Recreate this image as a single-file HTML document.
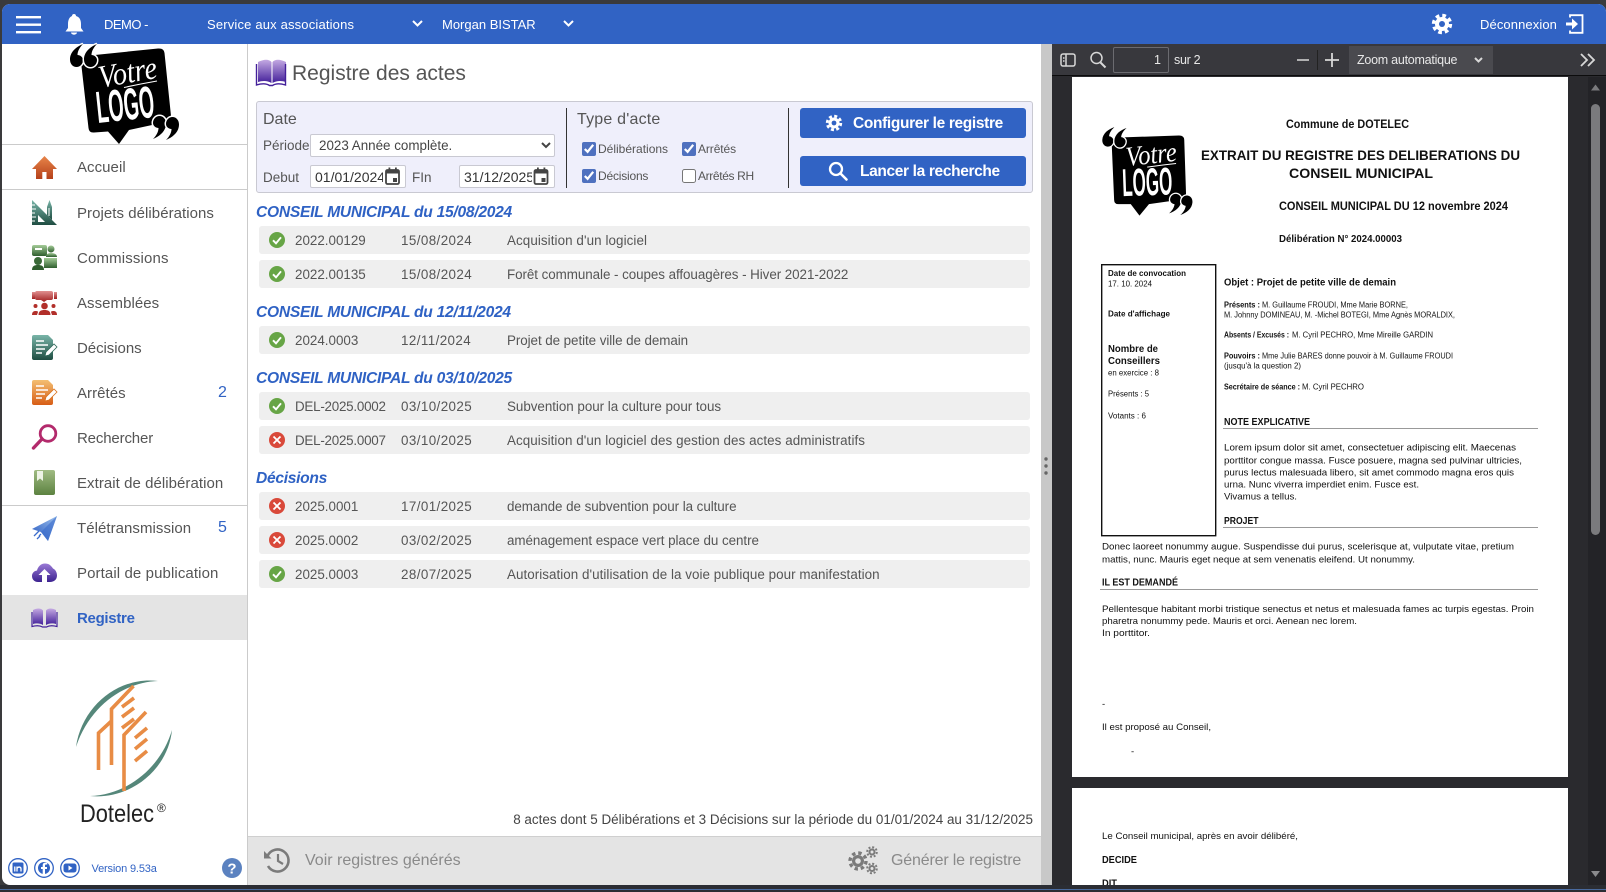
<!DOCTYPE html>
<html lang="fr"><head><meta charset="utf-8"><title>Registre des actes</title>
<style>
html,body{margin:0;padding:0;width:1606px;height:892px;overflow:hidden;background:#3a3a3c;font-family:"Liberation Sans",sans-serif}
*{box-sizing:border-box}
.a{position:absolute}
.t{position:absolute;white-space:nowrap;line-height:20px;height:20px}
svg{position:absolute;overflow:visible}
#app{position:absolute;left:2px;top:4px;width:1604px;height:881px;border-radius:8px 8px 8px 8px;overflow:hidden;background:#fff}
#stage{position:absolute;left:0;top:0;width:1606px;height:892px}
.hd{color:#fff;font-size:13px}
.nav{font-size:15px;color:#555;left:77px;letter-spacing:.05px}
.line{position:absolute;left:2px;width:245px;height:1px;background:#cbcbcb}
.row{position:absolute;left:259px;width:771px;height:28px;background:#efefef;border-radius:3px}
.c{font-size:13.4px;color:#555}
.d{left:401px;letter-spacing:.41px}
.h{left:256px;font-size:15.6px;font-weight:bold;font-style:italic;color:#2f62c4;letter-spacing:-.27px}
.btn{position:absolute;left:800px;width:226px;height:30px;background:#3163c4;border-radius:3px}
.bt{color:#fff;font-size:15.5px;font-weight:bold;letter-spacing:-.35px}
.lab{font-size:12px;color:#555}
.f{font-size:13.5px;color:#555}
input[type=checkbox]{position:absolute;margin:0;width:14px;height:14px;accent-color:#4f71bf}
.inp{position:absolute;height:23px;background:#fff;border:1px solid #c9c9d2;border-radius:2px;font:14px "Liberation Sans",sans-serif;color:#333;overflow:hidden;white-space:nowrap;line-height:22px}
</style></head><body>
<div id="stage">
<div id="app"></div>

<!-- header -->
<div class="a" style="left:2px;top:4px;width:1604px;height:40px;background:#3163c4;border-radius:8px 8px 0 0"></div>
<svg style="left:0;top:0" width="1606" height="44">
<g fill="#fff">
<rect x="16" y="16" width="25" height="2.4"/><rect x="16" y="23.5" width="25" height="2.4"/><rect x="16" y="31" width="25" height="2.4"/>
<path d="M74 14c1.200 0 2 .8 2 2 3.600 1 5 4 5 8v4l2.500 3.500H65.500L68 28v-4c0-4 1.400-7 4-8 0-1.200.8-2 2-2z"/><path d="M71 32.500h6a3 2.200 0 0 1-6 0z"/>
<path d="M413 21l4.500 4.500L422 21" fill="none" stroke="#fff" stroke-width="2"/>
<path d="M564 21l4.500 4.500L573 21" fill="none" stroke="#fff" stroke-width="2"/>
<circle cx="1442" cy="24" r="7"/><circle cx="1442" cy="24" r="8.500" fill="none" stroke="#fff" stroke-width="3.400" stroke-dasharray="3.700 2.980"/><circle cx="1442" cy="24" r="3" fill="#3163c4"/>
<path d="M1570 17.500v-2.300h12.500v17.600H1570v-2.300" fill="none" stroke="#fff" stroke-width="1.800"/><path d="M1566 22.500h6v-4l6 5.500-6 5.500v-4h-6z"/>
</g></svg>
<div class="t hd" style="left:104px;top:15px;letter-spacing:-.5px">DEMO -</div>
<div class="t hd" style="left:207px;top:15px;letter-spacing:.17px">Service aux associations</div>
<div class="t hd" style="left:442px;top:15px">Morgan BISTAR</div>
<div class="t hd" style="left:1480px;top:15px;letter-spacing:.1px">Déconnexion</div>

<!-- sidebar -->
<div class="a" style="left:247px;top:44px;width:1px;height:841px;background:#cbcbcb"></div>
<svg style="left:0;top:44px" width="248" height="102" viewBox="0 44 248 102">
<path d="M85 56 L158 48.500 Q164 48 164.500 53 L171 116 Q171.500 121 166 122 L129 130 L119 144 L108 131.500 L94 132.500 Q89 133 88.500 128 L81 62 Q80.500 57 85 56Z" fill="#000"/>
<g fill="#000" stroke="#fff" stroke-width="3" paint-order="stroke">
<path d="M83 44C76 47 70 52 70 59.500 70 64 73 67 76.500 67 80 67 83 64 83 60 83 57 80 55 77.500 55 77.500 51 80 47 83 44z"/>
<path d="M97 44C90 47 84 52 84 59.500 84 64 87 67 90.500 67 94 67 97 64 97 60 97 57 94 55 91.500 55 91.500 51 94 47 97 44z"/>
<path d="M153 139C160 136 166 131 166 123.500 166 119 163 116 159.500 116 156 116 153 119 153 123 153 126 156 128 158.500 128 158.500 132 156 136 153 139z"/>
<path d="M166 140C173 137 179 132 179 124.500 179 120 176 117 172.500 117 169 117 166 120 166 124 166 127 169 129 171.500 129 171.500 133 169 137 166 140z"/>
</g>
<text x="98" y="83" font-family="'Liberation Serif',serif" font-style="italic" font-size="32" fill="#fff" textLength="59" lengthAdjust="spacingAndGlyphs" transform="rotate(-10 127 72)">Votre</text>
<path d="M124 87.500Q140 84 157 81" fill="none" stroke="#fff" stroke-width="1.100"/>
<text x="96" y="120" font-family="'Liberation Sans',sans-serif" font-weight="bold" font-size="45" fill="#fff" textLength="58" lengthAdjust="spacingAndGlyphs" transform="rotate(-6 125 103)">LOGO</text>
</svg>
<div class="line" style="top:144px"></div>
<div class="line" style="top:189px"></div>
<div class="line" style="top:505px"></div>
<div class="a" style="left:2px;top:595px;width:245px;height:45px;background:#e4e4e4"></div>

<div class="t nav" style="top:158px">Accueil</div>
<div class="t nav" style="top:204px">Projets délibérations</div>
<div class="t nav" style="top:249px;letter-spacing:.15px">Commissions</div>
<div class="t nav" style="top:294px">Assemblées</div>
<div class="t nav" style="top:339px;letter-spacing:-.05px">Décisions</div>
<div class="t nav" style="top:384px">Arrêtés</div>
<div class="t nav" style="top:429px;letter-spacing:-.15px">Rechercher</div>
<div class="t nav" style="top:474px">Extrait de délibération</div>
<div class="t nav" style="top:519px">Télétransmission</div>
<div class="t nav" style="top:564px;letter-spacing:.1px">Portail de publication</div>
<div class="t nav" style="top:609px;color:#3163c4;font-weight:bold;letter-spacing:-.3px">Registre</div>
<div class="t" style="left:218px;top:383px;font-size:16px;color:#3163c4">2</div>
<div class="t" style="left:218px;top:518px;font-size:16px;color:#3163c4">5</div>

<svg style="left:0;top:0" width="248" height="892">
<defs>
<linearGradient id="g1" x1="0" y1="0" x2="0" y2="1"><stop offset="0" stop-color="#e8854a"/><stop offset="1" stop-color="#b5401a"/></linearGradient>
<linearGradient id="g2" x1="0" y1="0" x2="0" y2="1"><stop offset="0" stop-color="#79b5a8"/><stop offset="1" stop-color="#1f4d42"/></linearGradient>
<linearGradient id="g3" x1="0" y1="0" x2="0" y2="1"><stop offset="0" stop-color="#a4cc98"/><stop offset="1" stop-color="#2f5e2e"/></linearGradient>
<linearGradient id="g4" x1="0" y1="0" x2="0" y2="1"><stop offset="0" stop-color="#e08f8f"/><stop offset="1" stop-color="#a11f1f"/></linearGradient>
<linearGradient id="g5" x1="0" y1="0" x2="0" y2="1"><stop offset="0" stop-color="#f4bf72"/><stop offset="1" stop-color="#d75d16"/></linearGradient>
<linearGradient id="g6" x1="0" y1="0" x2="0" y2="1"><stop offset="0" stop-color="#a0bb83"/><stop offset="1" stop-color="#5c8240"/></linearGradient>
<linearGradient id="g7" x1="1" y1="0" x2="0" y2="1"><stop offset="0" stop-color="#9cc0ec"/><stop offset="1" stop-color="#2557c0"/></linearGradient>
<linearGradient id="g8" x1="0" y1="0" x2="0" y2="1"><stop offset="0" stop-color="#9a7ad6"/><stop offset="1" stop-color="#3d2390"/></linearGradient>
<linearGradient id="g9" x1="0" y1="0" x2="0" y2="1"><stop offset="0" stop-color="#c4a9e2"/><stop offset="1" stop-color="#43209a"/></linearGradient>
</defs>
<path d="M44.500 156L57 169h-4v10h-6.500v-7h-4.200v7H36v-10h-4z" fill="url(#g1)"/>
<path d="M32 200l25 25H32z" fill="url(#g2)"/><path d="M38 215l7 7h-7z" fill="#fff"/>
<path d="M32 205h3M32 209h4M32 213h3M32 217h4M32 221h3" stroke="#fff" stroke-width="1"/>
<path d="M47 207l2.500-7 2.500 7v13l-5-5z" fill="url(#g2)"/><path d="M49 208v8" stroke="#fff" stroke-width="1"/>
<g fill="url(#g3)"><rect x="32" y="245" width="15" height="11" rx="2"/><circle cx="51" cy="249" r="3.500"/><path d="M46 257c0-3 2-4 5-4s6 1 6 4z"/><rect x="44" y="258" width="13" height="10"/></g>
<rect x="35" y="248" width="7" height="2" fill="#fff"/>
<circle cx="38" cy="261" r="4" fill="#3a6a38"/><path d="M32 270c0-4 2.500-5 6-5s6 1 6 5z" fill="#2f5e2e"/>
<g fill="url(#g4)"><path d="M37 291h14q2 0 2 2v5q0 2-2 2h-4l-3 2-3-2h-4q-2 0-2-2v-5q0-2 2-2z"/><path d="M32 292h3v7h-3z"/><path d="M54 292h3v7h-3z"/></g>
<g fill="#b22f2a"><circle cx="44.500" cy="306" r="3.300"/><path d="M38.500 315c0-4 2.500-5 6-5s6 1 6 5z"/><circle cx="35.500" cy="306" r="2"/><path d="M32 315c0-3 1.500-4 3.500-4s2.500.5 2.500 1l-1 3z"/><circle cx="53.500" cy="306" r="2"/><path d="M57 315c0-3-1.500-4-3.500-4s-2.500.5-2.500 1l1 3z"/></g>
<path d="M34 335h14l5 5v18q0 2-2 2H34q-2 0-2-2v-21q0-2 2-2z" fill="url(#g2)"/>
<path d="M36 341h8M36 345h12M36 349h9M36 353h6" stroke="#fff" stroke-width="1.500"/>
<path d="M45 356l1-4 8-8 3 3-8 8z" fill="#fff" stroke="#2f6a5a" stroke-width=".8"/>
<path d="M34 380h14l5 5v18q0 2-2 2H34q-2 0-2-2v-21q0-2 2-2z" fill="url(#g5)"/>
<path d="M36 386h8M36 390h12M36 394h9M36 398h6" stroke="#fff" stroke-width="1.500"/>
<path d="M45 401l1-4 8-8 3 3-8 8z" fill="#fff" stroke="#d9701c" stroke-width=".8"/>
<circle cx="48" cy="433.500" r="7.800" fill="none" stroke="#b32a6c" stroke-width="2.800"/><path d="M42 439l-8.500 9" stroke="#b32a6c" stroke-width="3.400" stroke-linecap="round"/>
<rect x="34" y="470" width="21" height="25" rx="2" fill="url(#g6)"/><path d="M37 471h6v10l-3-2.500-3 2.500z" fill="#eef3e6"/>
<path d="M57 516L32 529l9 3 7 9z" fill="url(#g7)"/><path d="M57 516L41 532l7 9z" fill="#3a6ccb" opacity=".6"/>
<path d="M34 536l5-5M37 539l3-3M41 534l-2 2" stroke="#3a6ccb" stroke-width="1.300"/>
<path d="M38 582c-4 0-6-3-6-6s2-5 5-5.500c1-4 4-7 8-7s6 2 8 5c2.500 1 4 4 4 7 0 4-3 6.500-7 6.500z" fill="url(#g8)"/>
<path d="M44.500 569l6 6h-3.500v7h-5v-7h-3.500z" fill="#fff"/>
<g fill="url(#g9)"><path d="M33 610c4-2 8-2 10 .5V625c-3-2-7-2-10-1z"/><path d="M56 610c-4-2-8-2-10 .5V625c3-2 7-2 10-1z"/></g>
<path d="M32 612v14.500c4-1 8-1 10.500.5h4c2.500-1.500 6.500-1.500 10.500-.5V612" fill="none" stroke="#43209a" stroke-width="1.200"/>

<!-- dotelec -->
<path d="M76 747C82 705 120 676 158 681 125 682 90 705 76 747z" fill="#55877a"/>
<path d="M172 730C168 770 130 800 90 796 125 795 160 770 172 730z" fill="#55877a"/>
<g fill="none" stroke="#e88c45" stroke-width="3.600">
<path d="M98.500 770v-37l13-12"/><path d="M111.500 765v-56l22-23"/><path d="M124 791v-56l22-23"/>
<path d="M122 707l12-9M122 717l12-9M122 728l12-9"/><path d="M135 738l12-10M135 749l12-10M135 761l12-10"/>
</g>
<text x="80" y="822" font-family="'Liberation Sans',sans-serif" font-size="25" fill="#222" textLength="74" lengthAdjust="spacingAndGlyphs">Dotelec</text>
<text x="157" y="812" font-family="'Liberation Sans',sans-serif" font-size="12" fill="#222">®</text>
<!-- social -->
<g fill="none" stroke="#3163c4" stroke-width="1.300"><circle cx="18" cy="868" r="9.300"/><circle cx="44" cy="868" r="9.300"/><circle cx="70" cy="868" r="9.300"/></g>
<rect x="12.500" y="862.500" width="11" height="11" rx="1.500" fill="#3163c4"/><path d="M14.800 866.500v5M17 871.500v-5M17 868.500c1-2 4-2 4 .5v2.500" stroke="#fff" stroke-width="1.300" fill="none"/>
<circle cx="44" cy="868" r="6" fill="#3163c4"/><path d="M45 874v-5h2v-2h-2v-1.500c0-.8.4-1 1-1h1.200v-1.700H45c-1.600 0-2.300 1-2.300 2.500V867H41v2h1.700v5z" fill="#fff"/>
<rect x="63.500" y="863.500" width="13" height="9" rx="2.500" fill="#3163c4"/><path d="M68.500 865.500l4 2.500-4 2.500z" fill="#fff"/>
<circle cx="232" cy="868" r="10" fill="#5b82c0"/>
<text x="232" y="873.500" text-anchor="middle" font-family="'Liberation Sans',sans-serif" font-weight="bold" font-size="15" fill="#fff">?</text>
</svg>
<div class="t" style="left:91.500px;top:859px;font-size:11px;color:#3163c4;letter-spacing:-.16px">Version 9.53a</div>

<!-- main -->
<svg style="left:0;top:0" width="300" height="100">
<g fill="url(#g9)"><path d="M258 62c6-3 11-3 13.500 0v21c-4-2.500-9-2.500-13.500-1z"/><path d="M284 62c-6-3-11-3-13.500 0v21c4-2.500 9-2.500 13.500-1z" transform="translate(2)"/></g>
<path d="M256.500 64v21c5-1.500 10-1.500 13 .5h3c3-2 8-2 13-.5V64" fill="none" stroke="#43209a" stroke-width="1.400"/>
</svg>
<div class="t" style="left:292px;top:64px;font-size:21px;color:#555">Registre des actes</div>

<div class="a" style="left:256px;top:101px;width:777px;height:92px;background:#efeffb;border:1px solid #c9c9d2;border-radius:3px"></div>
<div class="t" style="left:263px;top:110px;font-size:16px;color:#555">Date</div>
<div class="a" style="left:566px;top:108px;width:1px;height:80px;background:#333"></div>
<div class="t" style="left:577px;top:110px;font-size:16px;color:#555;letter-spacing:.2px">Type d'acte</div>
<div class="a" style="left:788px;top:108px;width:1px;height:80px;background:#333"></div>
<div class="t f" style="left:263px;top:136px">Période</div>
<select class="a" style="left:310px;top:134px;width:245px;height:23px;background:#fff;border:1px solid #c9c9d2;border-radius:2px;font:13.400px 'Liberation Sans',sans-serif;color:#444;padding-left:4px"><option>2023 Année complète.</option></select>
<div class="t f" style="left:263px;top:168px">Debut</div>
<div class="inp" style="left:310px;top:165px;width:96px;padding-left:4px;"><span style="display:inline-block;width:68px;overflow:hidden">01/01/2024</span></div>
<div class="t f" style="left:412px;top:168px">FIn</div>
<div class="inp" style="left:459px;top:165px;width:96px;padding-left:4px;"><span style="display:inline-block;width:68px;overflow:hidden">31/12/2025</span></div>
<svg style="left:0;top:0" width="600" height="200">
<g fill="none" stroke="#444" stroke-width="1.800"><rect x="386" y="170" width="13" height="14" rx="1.500"/><rect x="534.500" y="170" width="13" height="14" rx="1.500"/></g>
<g fill="#444"><rect x="386" y="170" width="13" height="3.500"/><rect x="534.500" y="170" width="13" height="3.500"/><rect x="393" y="178" width="4" height="4"/><rect x="541.500" y="178" width="4" height="4"/><rect x="388.500" y="167.500" width="1.800" height="3"/><rect x="395" y="167.500" width="1.800" height="3"/><rect x="537" y="167.500" width="1.800" height="3"/><rect x="543.500" y="167.500" width="1.800" height="3"/></g>
</svg>
<input type="checkbox" checked style="left:582px;top:142px"><div class="t lab" style="left:598px;top:139px">Délibérations</div>
<input type="checkbox" checked style="left:682px;top:142px"><div class="t lab" style="left:698px;top:139px;letter-spacing:-.1px">Arrêtés</div>
<input type="checkbox" checked style="left:582px;top:169px"><div class="t lab" style="left:598px;top:166px;letter-spacing:-.2px">Décisions</div>
<input type="checkbox" style="left:682px;top:169px"><div class="t lab" style="left:698px;top:166px;letter-spacing:-.36px">Arrêtés RH</div>

<div class="btn" style="top:108px"></div><div class="t bt" style="left:853px;top:113.500px">Configurer le registre</div>
<div class="btn" style="top:156px"></div><div class="t bt" style="left:860px;top:161.500px">Lancer la recherche</div>
<svg style="left:0;top:0" width="900" height="200">
<circle cx="834" cy="123" r="5.500" fill="#fff"/><circle cx="834" cy="123" r="6.800" fill="none" stroke="#fff" stroke-width="2.800" stroke-dasharray="3 2.340"/><circle cx="834" cy="123" r="2.400" fill="#3163c4"/>
<circle cx="836" cy="169" r="6" fill="none" stroke="#fff" stroke-width="2.300"/><path d="M840.500 173.500l6 6" stroke="#fff" stroke-width="2.600" stroke-linecap="round"/>
</svg>

<div class="t h" style="top:203px">CONSEIL MUNICIPAL du 15/08/2024</div>
<div class="t h" style="top:303px">CONSEIL MUNICIPAL du 12/11/2024</div>
<div class="t h" style="top:369px">CONSEIL MUNICIPAL du 03/10/2025</div>
<div class="t h" style="top:469px;letter-spacing:-.3px">Décisions</div>

<div class="row" style="top:226px"></div>
<div class="row" style="top:260px"></div>
<div class="row" style="top:326px"></div>
<div class="row" style="top:392px"></div>
<div class="row" style="top:426px"></div>
<div class="row" style="top:492px"></div>
<div class="row" style="top:526px"></div>
<div class="row" style="top:560px"></div>

<div class="t c" style="left:295px;top:231px">2022.00129</div><div class="t c d" style="top:231px">15/08/2024</div><div class="t c" style="left:507px;top:231px;letter-spacing:.08px">Acquisition d'un logiciel</div>
<div class="t c" style="left:295px;top:265px">2022.00135</div><div class="t c d" style="top:265px">15/08/2024</div><div class="t c" style="left:507px;top:265px;letter-spacing:-.057px">Forêt communale - coupes affouagères - Hiver 2021-2022</div>
<div class="t c" style="left:295px;top:331px">2024.0003</div><div class="t c d" style="top:331px">12/11/2024</div><div class="t c" style="left:507px;top:331px;letter-spacing:-.064px">Projet de petite ville de demain</div>
<div class="t c" style="left:295px;top:397px;letter-spacing:-.24px">DEL-2025.0002</div><div class="t c d" style="top:397px">03/10/2025</div><div class="t c" style="left:507px;top:397px;letter-spacing:-.03px">Subvention pour la culture pour tous</div>
<div class="t c" style="left:295px;top:431px;letter-spacing:-.24px">DEL-2025.0007</div><div class="t c d" style="top:431px">03/10/2025</div><div class="t c" style="left:507px;top:431px;letter-spacing:.067px">Acquisition d'un logiciel des gestion des actes administratifs</div>
<div class="t c" style="left:295px;top:497px">2025.0001</div><div class="t c d" style="top:497px">17/01/2025</div><div class="t c" style="left:507px;top:497px;letter-spacing:-.055px">demande de subvention pour la culture</div>
<div class="t c" style="left:295px;top:531px">2025.0002</div><div class="t c d" style="top:531px">03/02/2025</div><div class="t c" style="left:507px;top:531px;letter-spacing:-.05px">aménagement espace vert place du centre</div>
<div class="t c" style="left:295px;top:565px">2025.0003</div><div class="t c d" style="top:565px">28/07/2025</div><div class="t c" style="left:507px;top:565px;letter-spacing:.047px">Autorisation d'utilisation de la voie publique pour manifestation</div>

<svg style="left:0;top:0" width="300" height="600">
<g fill="#67a546"><circle cx="277" cy="240" r="8"/><circle cx="277" cy="274" r="8"/><circle cx="277" cy="340" r="8"/><circle cx="277" cy="406" r="8"/><circle cx="277" cy="574" r="8"/></g>
<g fill="none" stroke="#fff" stroke-width="1.900"><path d="M273 240.300l3 3 5-6"/><path d="M273 274.300l3 3 5-6"/><path d="M273 340.300l3 3 5-6"/><path d="M273 406.300l3 3 5-6"/><path d="M273 574.300l3 3 5-6"/></g>
<g fill="#d9493a"><circle cx="277" cy="440" r="8"/><circle cx="277" cy="506" r="8"/><circle cx="277" cy="540" r="8"/></g>
<g fill="none" stroke="#fff" stroke-width="1.800"><path d="M273.500 436.500l7 7m0-7l-7 7"/><path d="M273.500 502.500l7 7m0-7l-7 7"/><path d="M273.500 536.500l7 7m0-7l-7 7"/></g>
</svg>

<div class="t" style="right:573px;top:810px;font-size:13.460px;color:#444">8 actes dont 5 Délibérations et 3 Décisions sur la période du 01/01/2024 au 31/12/2025</div>

<div class="a" style="left:248px;top:836px;width:793px;height:49px;background:#e4e4e4;border-top:1px solid #cfcfcf"></div>
<svg style="left:0;top:0" width="1041" height="892">
<path d="M267.500 856A11 11 0 1 1 268 866" fill="none" stroke="#7b7b7b" stroke-width="2.600"/><path d="M264 851v7.500h7.500z" fill="#7b7b7b"/><path d="M278 854v7l5 3" fill="none" stroke="#7b7b7b" stroke-width="2.200"/>
<circle cx="858" cy="861" r="6" fill="#7b7b7b"/><circle cx="858" cy="861" r="8" fill="none" stroke="#7b7b7b" stroke-width="3.400" stroke-dasharray="3.400 2.880"/><circle cx="858" cy="861" r="2.800" fill="#e4e4e4"/>
<circle cx="872" cy="852" r="3.500" fill="#7b7b7b"/><circle cx="872" cy="852" r="4.800" fill="none" stroke="#7b7b7b" stroke-width="2" stroke-dasharray="2 1.770"/><circle cx="872" cy="852" r="1.500" fill="#e4e4e4"/>
<circle cx="872" cy="868.500" r="3.500" fill="#7b7b7b"/><circle cx="872" cy="868.500" r="4.800" fill="none" stroke="#7b7b7b" stroke-width="2" stroke-dasharray="2 1.770"/><circle cx="872" cy="868.500" r="1.500" fill="#e4e4e4"/>
</svg>
<div class="t" style="left:305px;top:851px;font-size:16px;color:#8a8a8a">Voir registres générés</div>
<div class="t" style="left:891px;top:851px;font-size:16px;color:#8a8a8a;letter-spacing:-.17px">Générer le registre</div>

<!-- splitter -->
<div class="a" style="left:1041px;top:44px;width:11px;height:841px;background:#c8c8c8"></div>
<svg style="left:0;top:0" width="1060" height="500"><g fill="#666"><circle cx="1046" cy="459" r="1.700"/><circle cx="1046" cy="466" r="1.700"/><circle cx="1046" cy="473" r="1.700"/></g></svg>

<!-- pdf -->
<div class="a" style="left:1052px;top:44px;width:554px;height:841px;background:#2a2a2e;border-radius:0 0 8px 0;overflow:hidden"></div>
<div class="a" style="left:1052px;top:44px;width:554px;height:32px;background:#38383d;border-bottom:1px solid #0c0c0d"></div>
<div class="a" style="left:1113px;top:47px;width:56px;height:26px;border:1px solid #6b6b70;border-radius:2px;color:#e8e8e8;font-size:12.500px;line-height:24px;text-align:right;padding-right:7px">1</div>
<div class="t" style="left:1174px;top:50px;font-size:12.500px;color:#e8e8e8;letter-spacing:-.3px">sur 2</div>
<div class="a" style="left:1349px;top:46px;width:144px;height:28px;background:#4a4a4f"></div>
<div class="t" style="left:1357px;top:50px;font-size:12.500px;color:#e8e8e8;letter-spacing:-.25px">Zoom automatique</div>
<svg style="left:0;top:0" width="1606" height="892">
<g fill="none" stroke="#d8d8d8" stroke-width="1.500">
<rect x="1061" y="54" width="14" height="12" rx="2"/><path d="M1066 54v12M1063 58h1.500M1063 61h1.500"/>
<circle cx="1096.500" cy="58" r="5.500"/><path d="M1100.500 62.500l5 5" stroke-width="2"/>
<path d="M1297 60h12"/><path d="M1325 60h14M1332 53v14" stroke-width="1.800"/>
<path d="M1475 58l3.500 3.500L1482 58" stroke-width="2"/>
<path d="M1581 54l6 6-6 6M1588 54l6 6-6 6" stroke-width="1.800"/>
</g>
<rect x="1317" y="50" width="1" height="20" fill="#222"/>
<!-- scrollbar -->
<rect x="1588" y="77" width="18" height="808" fill="#232327"/>
<rect x="1591" y="104" width="9" height="431" rx="4.500" fill="#7a7a7d"/>
<path d="M1591 90.500l4.500-6 4.500 6z" fill="#7a7a7d"/><path d="M1591 871l4.500 6 4.500-6z" fill="#8a8a8d"/>
</svg>
<div class="a" style="left:1072px;top:77px;width:496px;height:700px;background:#fff"></div>
<div class="a" style="left:1072px;top:788px;width:496px;height:97px;background:#fff"></div>

<svg style="left:0;top:0;overflow:hidden" width="1606" height="885" font-family="'Liberation Sans',sans-serif" fill="#111">
<g transform="translate(1039.500 91.500) scale(.865) rotate(4 125 95)" >
<path d="M85 56 L158 48.500 Q164 48 164.500 53 L171 116 Q171.500 121 166 122 L129 130 L119 144 L108 131.500 L94 132.500 Q89 133 88.500 128 L81 62 Q80.500 57 85 56Z" fill="#000"/>
<g fill="#000" stroke="#fff" stroke-width="3" paint-order="stroke">
<path d="M83 44C76 47 70 52 70 59.500 70 64 73 67 76.500 67 80 67 83 64 83 60 83 57 80 55 77.500 55 77.500 51 80 47 83 44z"/>
<path d="M97 44C90 47 84 52 84 59.500 84 64 87 67 90.500 67 94 67 97 64 97 60 97 57 94 55 91.500 55 91.500 51 94 47 97 44z"/>
<path d="M153 139C160 136 166 131 166 123.500 166 119 163 116 159.500 116 156 116 153 119 153 123 153 126 156 128 158.500 128 158.500 132 156 136 153 139z"/>
<path d="M166 140C173 137 179 132 179 124.500 179 120 176 117 172.500 117 169 117 166 120 166 124 166 127 169 129 171.500 129 171.500 133 169 137 166 140z"/>
</g>
<text x="98" y="83" font-family="'Liberation Serif',serif" font-style="italic" font-size="32" fill="#fff" textLength="59" lengthAdjust="spacingAndGlyphs" transform="rotate(-10 127 72)">Votre</text>
<path d="M124 87.500Q140 84 157 81" fill="none" stroke="#fff" stroke-width="1.100"/>
<text x="96" y="120" font-weight="bold" font-size="45" fill="#fff" textLength="58" lengthAdjust="spacingAndGlyphs" transform="rotate(-6 125 103)">LOGO</text>
</g>
<g font-weight="bold">
<text x="1286" y="128" font-size="11.500" textLength="123" lengthAdjust="spacingAndGlyphs">Commune de DOTELEC</text>
<text x="1201" y="160" font-size="14" textLength="319" lengthAdjust="spacingAndGlyphs">EXTRAIT DU REGISTRE DES DELIBERATIONS DU</text>
<text x="1289" y="178" font-size="14" textLength="144" lengthAdjust="spacingAndGlyphs">CONSEIL MUNICIPAL</text>
<text x="1279" y="210" font-size="11.500" textLength="229" lengthAdjust="spacingAndGlyphs">CONSEIL MUNICIPAL DU 12 novembre 2024</text>
<text x="1279" y="242" font-size="10" textLength="123" lengthAdjust="spacingAndGlyphs">Délibération N° 2024.00003</text>
<text x="1108" y="276" font-size="8" textLength="78" lengthAdjust="spacingAndGlyphs">Date de convocation</text>
<text x="1108" y="316.500" font-size="8" textLength="62" lengthAdjust="spacingAndGlyphs">Date d'affichage</text>
<text x="1108" y="352" font-size="10" textLength="50" lengthAdjust="spacingAndGlyphs">Nombre de</text>
<text x="1108" y="364" font-size="10" textLength="52" lengthAdjust="spacingAndGlyphs">Conseillers</text>
<text x="1224" y="285.500" font-size="10" textLength="172" lengthAdjust="spacingAndGlyphs">Objet : Projet de petite ville de demain</text>
<text x="1224" y="307.500" font-size="8" textLength="36" lengthAdjust="spacingAndGlyphs">Présents :</text>
<text x="1224" y="337.500" font-size="8" textLength="65" lengthAdjust="spacingAndGlyphs">Absents / Excusés :</text>
<text x="1224" y="358.500" font-size="8" textLength="36" lengthAdjust="spacingAndGlyphs">Pouvoirs :</text>
<text x="1224" y="389.500" font-size="8" textLength="76" lengthAdjust="spacingAndGlyphs">Secrétaire de séance :</text>
<text x="1224" y="425" font-size="10" textLength="86" lengthAdjust="spacingAndGlyphs">NOTE EXPLICATIVE</text>
<text x="1224" y="524" font-size="10" textLength="34.500" lengthAdjust="spacingAndGlyphs">PROJET</text>
<text x="1102" y="585.500" font-size="10" textLength="76" lengthAdjust="spacingAndGlyphs">IL EST DEMANDÉ</text>
<text x="1102" y="863" font-size="10" textLength="35" lengthAdjust="spacingAndGlyphs">DECIDE</text>
<text x="1102" y="886.500" font-size="10" textLength="15" lengthAdjust="spacingAndGlyphs">DIT</text>
</g>
<rect x="1101.700" y="264.700" width="114" height="271" fill="none" stroke="#111" stroke-width="1.400"/>
<path d="M1223 428.500h315M1223 527.500h315M1100 589.500h438" stroke="#999" stroke-width="1"/>
<g font-size="7.800">
<text x="1108" y="286.500" textLength="44" lengthAdjust="spacingAndGlyphs">17. 10. 2024</text>
<text x="1108" y="375.500" textLength="51" lengthAdjust="spacingAndGlyphs">en exercice : 8</text>
<text x="1108" y="396.500" textLength="41" lengthAdjust="spacingAndGlyphs">Présents : 5</text>
<text x="1108" y="418.500" textLength="38" lengthAdjust="spacingAndGlyphs">Votants : 6</text>
<text x="1262" y="307.500" textLength="146" lengthAdjust="spacingAndGlyphs">M. Guillaume FROUDI, Mme Marie BORNE,</text>
<text x="1224" y="317.500" textLength="231" lengthAdjust="spacingAndGlyphs">M. Johnny DOMINEAU,  M. -Michel BOTEGI,  Mme Agnès MORALDIX,</text>
<text x="1292" y="337.500" textLength="141" lengthAdjust="spacingAndGlyphs">M. Cyril PECHRO,  Mme Mireille GARDIN</text>
<text x="1262" y="358.500" textLength="191" lengthAdjust="spacingAndGlyphs">Mme Julie BARES donne pouvoir à M. Guillaume FROUDI</text>
<text x="1224" y="368.500" textLength="77" lengthAdjust="spacingAndGlyphs">(jusqu'à  la question 2)</text>
<text x="1302" y="389.500" textLength="62" lengthAdjust="spacingAndGlyphs">M. Cyril PECHRO</text>
</g>
<g font-size="9.500">
<text x="1224" y="450.500" textLength="292" lengthAdjust="spacingAndGlyphs">Lorem ipsum dolor sit amet, consectetuer adipiscing elit. Maecenas</text>
<text x="1224" y="463.500" textLength="298" lengthAdjust="spacingAndGlyphs">porttitor congue massa. Fusce posuere, magna sed pulvinar ultricies,</text>
<text x="1224" y="475.500" textLength="290" lengthAdjust="spacingAndGlyphs">purus lectus malesuada libero, sit amet commodo magna eros quis</text>
<text x="1224" y="487.500" textLength="195" lengthAdjust="spacingAndGlyphs">urna. Nunc viverra imperdiet enim. Fusce est.</text>
<text x="1224" y="499.500" textLength="73" lengthAdjust="spacingAndGlyphs">Vivamus a tellus.</text>
<text x="1102" y="549.500" textLength="412" lengthAdjust="spacingAndGlyphs">Donec laoreet nonummy augue. Suspendisse dui purus, scelerisque at, vulputate vitae, pretium</text>
<text x="1102" y="562.500" textLength="313" lengthAdjust="spacingAndGlyphs">mattis, nunc. Mauris eget neque at sem venenatis eleifend. Ut nonummy.</text>
<text x="1102" y="612" textLength="432" lengthAdjust="spacingAndGlyphs">Pellentesque habitant morbi tristique senectus et netus et malesuada fames ac turpis egestas. Proin</text>
<text x="1102" y="624" textLength="255" lengthAdjust="spacingAndGlyphs">pharetra nonummy pede. Mauris et orci. Aenean nec lorem.</text>
<text x="1102" y="636" textLength="48" lengthAdjust="spacingAndGlyphs">In porttitor.</text>
<text x="1102" y="707">-</text>
<text x="1102" y="730" textLength="109" lengthAdjust="spacingAndGlyphs">Il est proposé au Conseil,</text>
<text x="1131" y="754.500">-</text>
<text x="1102" y="839" textLength="196" lengthAdjust="spacingAndGlyphs">Le Conseil municipal, après en avoir délibéré,</text>
</g>
</svg>

<div class="a" style="left:0;top:885px;width:1606px;height:7px;background:#2b2d33"></div>
<div class="a" style="left:0;top:889px;width:1606px;height:1px;background:#4a6a9e"></div>
</div>
</body></html>
